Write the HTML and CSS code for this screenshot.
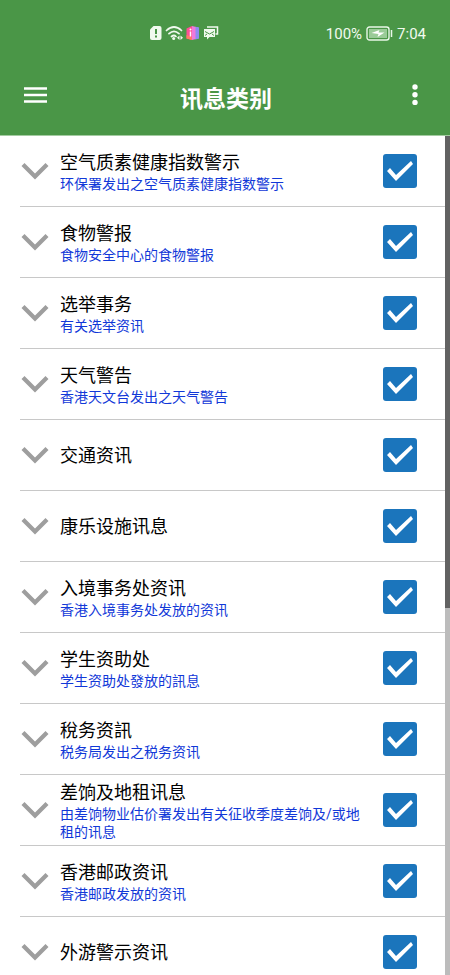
FILE: index.html
```
<!DOCTYPE html>
<html lang="zh-Hans">
<head>
<meta charset="utf-8">
<meta name="viewport" content="width=device-width, initial-scale=1">
<title>讯息类别</title>
<link rel="stylesheet" href="styles.css">
</head>
<body>
<svg class="defs" aria-hidden="true"><symbol id="chevron" viewBox="0 0 28 18"><path d="M.5 4 3.500 1 14 11.500 24.500 1l3 3L14 17.500z" fill="#9e9e9e"/></symbol></svg>
<header class="header">
  <div class="status">
    <svg class="status-icons" viewBox="0 0 70 16" aria-hidden="true">
      <path d="M4.500 1H10.500a2 2 0 0 1 2 2v10a2 2 0 0 1-2 2H3a2 2 0 0 1-2-2V4.500z" fill="#f1faef"/>
      <path d="M7 4v5M7 10.500v2" stroke="#4a9647" stroke-width="2"/>
      <g fill="none" stroke="#f1faef" stroke-width="1.700" stroke-linecap="round">
        <path d="M17.500 5.500q7.500-7 15 0M20 8.700q5-4.500 10 0M22.500 11.500q2.500-2 4.500 0"/>
      </g>
      <circle cx="24.700" cy="13.600" r="1.500" fill="#f1faef"/>
      <path d="M30.500 10.500v4.500L28 12.700zM31.500 10.500v4.500l2.500-2.300z" fill="#f1faef"/>
      <path d="M37.500 3.500 43 1v14l-5.500-1.500z" fill="#ff4f96"/>
      <path d="M43 1l6.500 1.500v11L43 15z" fill="#ee79dc"/>
      <path d="M46.500 1.800 50 2.500v11l-3.500 1z" fill="#8d8bf0"/>
      <path d="M37.500 10l5.500 2v3l-5.500-1.500z" fill="#ff7b65"/>
      <path d="M41.500 6.500v5" stroke="#fff" stroke-width="1.500"/><circle cx="41.500" cy="4.500" r="1" fill="#fff"/>
      <path d="M58 2h10.500v7h-2" fill="none" stroke="#f1faef" stroke-width="1.500"/>
      <path d="M55 4h11v8h-5.500L58 14.500V12h-3z" fill="#f1faef"/>
      <path d="M56 6.500l4.500 2.500L65 6.500M56 10.500l2-1.500M65 10.500l-2-1.500" fill="none" stroke="#4a9647"/>
    </svg>
    <div class="status-right">
      <span>100%</span>
      <svg class="battery" viewBox="0 0 27 15" aria-hidden="true">
        <rect x="1" y="1" width="22" height="13" rx="2.500" fill="none" stroke="#e9f7e8" stroke-width="1.400"/>
        <rect x="3" y="3" width="18" height="9" fill="#9acb98"/>
        <path d="M5.500 7l8-3-1 2.500h6L11.500 11l1-3z" fill="#fff"/>
        <path d="M25.500 4v7" stroke="#e9f7e8" stroke-width="1.500"/>
      </svg>
      <time>7:04</time>
    </div>
  </div>
  <div class="appbar">
    <button class="icon-button" type="button" aria-label="菜单"><svg class="menu-icon" viewBox="0 0 23 16"><path d="M0 1.500h23M0 8h23M0 14.500h23" stroke="#fff" stroke-width="2.500"/></svg></button>
    <h1 class="heading">讯息类别</h1>
    <button class="icon-button icon-button-end" type="button" aria-label="更多"><svg class="more-icon" viewBox="0 0 6 22"><g fill="#fff"><circle cx="3" cy="3" r="2.700"/><circle cx="3" cy="10.700" r="2.700"/><circle cx="3" cy="18.400" r="2.700"/></g></svg></button>
  </div>
</header>
<main class="content">
  <ul class="list">
    <li class="row"><button class="expand" type="button" aria-label="展开"><svg class="chevron"><use href="#chevron"/></svg></button><label class="text" for="c1"><span class="title">空气质素健康指数警示</span><span class="desc">环保署发出之空气质素健康指数警示</span></label><input class="check" type="checkbox" id="c1" checked></li>
    <li class="row"><button class="expand" type="button" aria-label="展开"><svg class="chevron"><use href="#chevron"/></svg></button><label class="text" for="c2"><span class="title">食物警报</span><span class="desc">食物安全中心的食物警报</span></label><input class="check" type="checkbox" id="c2" checked></li>
    <li class="row"><button class="expand" type="button" aria-label="展开"><svg class="chevron"><use href="#chevron"/></svg></button><label class="text" for="c3"><span class="title">选举事务</span><span class="desc">有关选举资讯</span></label><input class="check" type="checkbox" id="c3" checked></li>
    <li class="row"><button class="expand" type="button" aria-label="展开"><svg class="chevron"><use href="#chevron"/></svg></button><label class="text" for="c4"><span class="title">天气警告</span><span class="desc">香港天文台发出之天气警告</span></label><input class="check" type="checkbox" id="c4" checked></li>
    <li class="row"><button class="expand" type="button" aria-label="展开"><svg class="chevron"><use href="#chevron"/></svg></button><label class="text" for="c5"><span class="title">交通资讯</span></label><input class="check" type="checkbox" id="c5" checked></li>
    <li class="row"><button class="expand" type="button" aria-label="展开"><svg class="chevron"><use href="#chevron"/></svg></button><label class="text" for="c6"><span class="title">康乐设施讯息</span></label><input class="check" type="checkbox" id="c6" checked></li>
    <li class="row"><button class="expand" type="button" aria-label="展开"><svg class="chevron"><use href="#chevron"/></svg></button><label class="text" for="c7"><span class="title">入境事务处资讯</span><span class="desc">香港入境事务处发放的资讯</span></label><input class="check" type="checkbox" id="c7" checked></li>
    <li class="row"><button class="expand" type="button" aria-label="展开"><svg class="chevron"><use href="#chevron"/></svg></button><label class="text" for="c8"><span class="title">学生资助处</span><span class="desc">学生资助处發放的訊息</span></label><input class="check" type="checkbox" id="c8" checked></li>
    <li class="row"><button class="expand" type="button" aria-label="展开"><svg class="chevron"><use href="#chevron"/></svg></button><label class="text" for="c9"><span class="title">稅务资訊</span><span class="desc">税务局发出之税务资讯</span></label><input class="check" type="checkbox" id="c9" checked></li>
    <li class="row"><button class="expand" type="button" aria-label="展开"><svg class="chevron"><use href="#chevron"/></svg></button><label class="text" for="c10"><span class="title">差饷及地租讯息</span><span class="desc">由差饷物业估价署发出有关征收季度差饷及/或地租的讯息</span></label><input class="check" type="checkbox" id="c10" checked></li>
    <li class="row"><button class="expand" type="button" aria-label="展开"><svg class="chevron"><use href="#chevron"/></svg></button><label class="text" for="c11"><span class="title">香港邮政资讯</span><span class="desc">香港邮政发放的资讯</span></label><input class="check" type="checkbox" id="c11" checked></li>
    <li class="row"><button class="expand" type="button" aria-label="展开"><svg class="chevron"><use href="#chevron"/></svg></button><label class="text" for="c12"><span class="title">外游警示资讯</span></label><input class="check" type="checkbox" id="c12" checked></li>
  </ul>
  <div class="scrollbar"><div class="thumb"></div></div>
</main>
</body>
</html>
```
FILE: styles.css
```
* {
  box-sizing: border-box;
}

body {
  margin: 0;
  height: 100vh;
  display: flex;
  flex-direction: column;
  overflow: hidden;
  background: #fff;
  color: #000;
  font-family: Roboto, "Noto Sans CJK SC", sans-serif;
}

.defs {
  display: none;
}

button {
  padding: 0;
  border: 0;
  background: none;
}

svg {
  display: block;
}

.header {
  flex: none;
  background: #4a9647;
  color: #fff;
  border-bottom: 1px solid #a3cba1;
}

.status {
  display: grid;
  grid-template-columns: 1fr auto;
  align-items: center;
  height: 66px;
  padding: 0 24px 0 149px;
}

.status-icons {
  width: 70px;
  height: 16px;
}

.status-right {
  display: flex;
  align-items: center;
  gap: 4px;
  padding-top: 1px;
  font-size: 15px;
  line-height: 18px;
  color: #f1faef;
}

.battery {
  width: 27px;
  height: 15px;
}

.appbar {
  display: grid;
  grid-template-columns: 48px 1fr 48px;
  align-items: center;
  height: 69px;
  padding: 0 22px 12px 24px;
}

.icon-button {
  display: flex;
  align-items: center;
  height: 48px;
}

.icon-button-end {
  justify-content: flex-end;
  padding-right: 10px;
}

.menu-icon {
  width: 23px;
  height: 16px;
}

.more-icon {
  width: 6px;
  height: 22px;
}

.heading {
  margin: 0;
  padding-top: 10px;
  text-align: center;
  font-size: 23px;
  line-height: 32px;
  font-weight: 700;
}

.content {
  flex: 1;
  min-height: 0;
  display: flex;
}

.list {
  flex: 1;
  margin: 0;
  padding: 0 0 0 20px;
  list-style: none;
  overflow: hidden;
}

.row {
  display: grid;
  grid-template-columns: 40px 1fr 34px;
  align-items: center;
  min-height: 71px;
  padding: 4px 28px 4px 0;
  border-bottom: 1px solid #c8c8c8;
}

.expand {
  width: 30px;
}

.chevron {
  width: 28px;
  height: 18px;
  margin: 0 auto;
}

.text {
  display: flex;
  flex-direction: column;
  padding: 2px 20px 0 0;
}

.title {
  font-size: 18px;
  line-height: 24px;
}

.desc {
  font-size: 14px;
  line-height: 18px;
  color: #1138d8;
}

.check {
  appearance: none;
  width: 34px;
  height: 34px;
  margin: 0;
  border-radius: 3px;
  background: #1b75bc;
}

.check:checked::before {
  content: "";
  display: block;
  width: 34px;
  height: 34px;
  background: #fff;
  clip-path: polygon(4px 17px, 7px 14px, 13px 21px, 28px 7px, 30px 10px, 13px 27px);
}

.scrollbar {
  flex: none;
  width: 5px;
  background: #bcbcbc;
}

.thumb {
  height: 56.3%;
  background: #626262;
}
```
